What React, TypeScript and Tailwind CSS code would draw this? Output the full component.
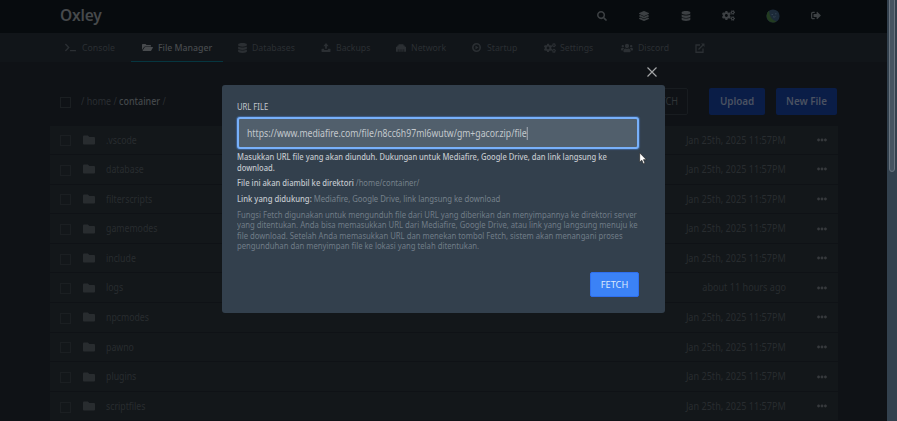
import React from "react";
import {
  FaCogs, FaDatabase, FaEthernet, FaFolder, FaLayerGroup,
  FaSearch, FaSignOutAlt, FaTerminal, FaUsers, FaEllipsisH,
} from "react-icons/fa";

function OpenFolder({ className }: { className?: string }) {
  return (
    <svg viewBox="0 0 22 18" className={className} fill="currentColor">
      <path d="M0 14V3.500Q0 2 1.500 2H7l2 2h7.500Q18 4 18 5.500V7H6.500Q4.500 7 3.700 8.500z" />
      <path d="M6.800 8.200H21q1.400 0 .7 1.200l-3.200 5.600q-.6 1-1.700 1H2q-1.300 0-.6-1.200l3.500-5.600q.6-1 1.900-1z" />
    </svg>
  );
}

function PlayRing({ className }: { className?: string }) {
  return (
    <svg viewBox="0 0 20 20" className={className}>
      <circle cx="10" cy="10" r="8.2" fill="none" stroke="currentColor" strokeWidth="3.6" />
      <path d="M7.600 5.800 14.400 10l-6.800 4.200z" fill="currentColor" />
    </svg>
  );
}

function UploadTray({ className }: { className?: string }) {
  return (
    <svg viewBox="0 0 20 20" className={className} fill="currentColor">
      <path d="M10 0 16 7h-4v6H8V7H4z" />
      <path d="M1 13h5v2.500h8V13h5q1 0 1 1v5q0 1-1 1H1q-1 0-1-1v-5q0-1 1-1z" />
    </svg>
  );
}

function ExternalLink({ className }: { className?: string }) {
  return (
    <svg viewBox="0 0 20 20" className={className} fill="none" stroke="currentColor" strokeWidth="2.6">
      <path d="M10 4H2v14.500h14V11M7 13 17 3" />
      <path d="M12 1h7v7z" fill="currentColor" stroke="none" />
    </svg>
  );
}

const tabs = [
  { label: "Console", Icon: FaTerminal, box: "ml-[54px] w-[77px]", icon: "w-[11px] h-[11px]", gap: "gap-[6px]" },
  { label: "File Manager", Icon: OpenFolder, box: "w-[92px]", icon: "w-[11px] h-[9px]", gap: "gap-[5px]", active: true },
  { label: "Databases", Icon: FaDatabase, box: "ml-[4px] w-[83px]", icon: "w-[9px] h-[10px]", gap: "gap-[5px]" },
  { label: "Backups", Icon: UploadTray, box: "w-[75px]", icon: "w-[10px] h-[9px]", gap: "gap-[5px]" },
  { label: "Network", Icon: FaEthernet, box: "w-[76px]", icon: "w-[10px] h-[10px]", gap: "gap-[5px]" },
  { label: "Startup", Icon: PlayRing, box: "w-[72px]", icon: "w-[9px] h-[9px]", gap: "gap-[6px]" },
  { label: "Settings", Icon: FaCogs, box: "w-[77px]", icon: "w-[12px] h-[10px]", gap: "gap-[4px]" },
  { label: "Discord", Icon: FaUsers, box: "w-[74px]", icon: "w-[12px] h-[10px]", gap: "gap-[5px]" },
];

const files = [".vscode", "database", "filterscripts", "gamemodes", "include", "logs", "npcmodes", "pawno", "plugins", "scriptfiles"];

function Header() {
  return (
    <header className="flex h-[33px] items-center bg-[#070b0e] pb-[2px] pl-[60px] text-[#3c4043]">
      <span className="w-[537px] text-[15.5px] font-semibold leading-none tracking-[-0.2px] text-[#46494b]">Oxley</span>
      <FaSearch className="h-[10px] w-[10px]" />
      <FaLayerGroup className="ml-[32px] h-[10px] w-[10px]" />
      <FaDatabase className="ml-[32px] h-[10px] w-[10px]" />
      <FaCogs className="ml-[31px] h-[11px] w-[13px]" />
      <svg viewBox="0 0 14 14" className="ml-[31px] h-[14px] w-[14px]">
        <circle cx="7" cy="7" r="6.6" fill="#1c2a39" />
        <path d="M3 1.800A6.600 6.600 0 0 0 10.500 12.600Q3.800 11 3 1.800z" fill="#233c20" />
        <path d="M5.500 5.500h1.500M9 4.800h1.500M7 7.800q1.500 .7 2.500-.4" stroke="#384957" strokeWidth=".8" fill="none" />
      </svg>
      <FaSignOutAlt className="ml-[31px] h-[11px] w-[10px]" />
    </header>
  );
}

function Tabs() {
  return (
    <nav className="flex h-[29px] bg-[#111519] text-[9.6px] text-[#2b2f33]">
      {tabs.map(({ label, Icon, box, icon, gap, active }) => (
        <div key={label} className={`flex shrink-0 items-center border-b pl-[11px] pt-[1px] ${box} ${gap} ${active ? "border-b-[#063640] font-medium text-[#484b4e]" : "border-b-transparent"}`}>
          <Icon className={`shrink-0 ${icon}`} />
          <span className="origin-left scale-x-[0.91] whitespace-nowrap leading-none">{label}</span>
        </div>
      ))}
      <ExternalLink className="ml-[11px] mt-[10px] h-[10px] w-[10px]" />
    </nav>
  );
}

function Box() {
  return <span className="h-[11px] w-[11px] shrink-0 border border-[#1b1f22]" />;
}

function Files() {
  return (
    <main className="box-content flex w-[788px] flex-col pl-[49.5px]">
      <div className="flex h-[63.5px] items-start pl-[10.5px] pt-[26px]">
        <div className="flex h-[28px] items-center text-[10.2px] text-[#2a2e32]">
          <Box />
          <span className="ml-[10px] origin-left scale-x-[0.88] whitespace-pre">/ home / <b className="font-medium text-[#43474a]">container</b> /</span>
        </div>
        <div className="ml-auto flex h-[27px] pr-[0.5px] text-[10.4px]">
          <div className="mr-[21px] flex w-[52px] items-center justify-end rounded-[2px] border border-[#181c20] pr-[9px] text-[#303437]"><span className="origin-right scale-x-[0.88]">FETCH</span></div>
          <div className="mr-[11px] flex w-[56px] items-center justify-center rounded-[2px] bg-[#0a1d47] pt-[1px] font-semibold text-[#4b5261]"><span className="scale-x-[0.95]">Upload</span></div>
          <div className="flex w-[61px] items-center justify-center rounded-[2px] bg-[#0a1d47] pt-[1px] font-semibold text-[#4b5261]"><span className="scale-x-[0.95]">New File</span></div>
        </div>
      </div>
      {files.map((name) => (
        <div key={name} className="mb-[1.1px] flex h-[28.5px] shrink-0 items-center bg-[#13171a] pl-[10.5px] text-[10px] text-[#282c2f]">
          <span className="flex pt-[2px]"><Box /></span>
          <FaFolder className="ml-[12px] h-[12px] w-[12px]" />
          <span className="ml-[11px] origin-left scale-x-[0.875] pt-[0.5px]">{name}</span>
          <span className="ml-auto origin-right scale-x-[0.91] pt-[0.5px]">{name === "logs" ? "about 11 hours ago" : "Jan 25th, 2025 11:57PM"}</span>
          <FaEllipsisH className="ml-[31px] mr-[11px] h-[10px] w-[10px] text-[#36393c]" />
        </div>
      ))}
    </main>
  );
}

function FetchDialog() {
  return (
    <section role="dialog" className="absolute left-[222px] top-[85px] flex h-[227.5px] w-[443px] flex-col rounded-[3px] bg-[#33404d] px-[15px] pt-[17px] text-[8.2px] leading-[10.5px] text-[#c3c8cd]">
      <svg viewBox="0 0 10 10" className="absolute -top-[18px] right-[8px] h-[10px] w-[10px]" stroke="#a3a5a6" strokeWidth="1.2">
        <path d="M.5 .5 9.500 9.500M9.500 .5 .5 9.500" />
      </svg>
      <div className="origin-left scale-x-[0.88] text-[8.7px]">URL FILE</div>
      <div className="mt-[4.5px] flex h-[32px] w-[402px] items-center rounded-[3px] border-2 border-[#78b0fa] bg-[#515f6c] pl-[8px] text-[10.2px] shadow-[0_0_1px_1px_#3d5f8c]">
        <span className="flex origin-left scale-x-[0.853] items-center">
          https://www.mediafire.com/file/n8cc6h97ml6wutw/gm+gacor.zip/file
          <span className="h-[13px] w-px bg-[#b4bbc2]" />
        </span>
      </div>
      <p className="mt-[3px] origin-left scale-x-[0.924] whitespace-nowrap font-medium">Masukkan URL file yang akan diunduh. Dukungan untuk Mediafire, Google Drive, dan link langsung ke<br />download.</p>
      <p className="mt-[5px] origin-left scale-x-[0.935] whitespace-nowrap"><b className="font-medium">File ini akan diambil ke direktori</b> <span className="text-[#76818b]">/home/container/</span></p>
      <p className="mt-[5px] origin-left scale-x-[0.941] whitespace-nowrap"><b className="font-medium">Link yang didukung:</b> <span className="text-[#76818b]">Mediafire, Google Drive, link langsung ke download</span></p>
      <p className="mt-[5.5px] origin-left scale-x-[0.941] whitespace-nowrap text-[#707c87]">
        Fungsi Fetch digunakan untuk mengunduh file dari URL yang diberikan dan menyimpannya ke direktori server<br />
        yang ditentukan. Anda bisa memasukkan URL dari Mediafire, Google Drive, atau link yang langsung menuju ke<br />
        file download. Setelah Anda memasukkan URL dan menekan tombol Fetch, sistem akan menangani proses<br />
        pengunduhan dan menyimpan file ke lokasi yang telah ditentukan.
      </p>
      <button className="ml-[353px] mt-[20.5px] h-[25px] w-[49px] rounded-[2px] border border-[#2f6fee] bg-[#3b82f6] pt-[1px] text-[9.2px] text-[#dce9fd]">FETCH</button>
    </section>
  );
}

export default function App() {
  return (
    <div className="relative flex h-[421px] w-[897px] overflow-hidden bg-[#0f1216] font-['Noto_Sans',sans-serif]">
      <div className="h-full w-[887px] shrink-0 overflow-hidden">
        <Header />
        <Tabs />
        <Files />
      </div>
      <div className="w-[10px] bg-[#33414e] pl-[2px]">
        <div className="-mt-[3px] h-[175px] w-[6px] rounded-[3px] border border-[#6a7580] bg-[#465461]" />
      </div>
      <FetchDialog />
      <svg viewBox="0 0 12 19" className="absolute left-[639px] top-[152px] h-[13px] w-[8px]">
        <path d="M1 1v14l3.200-3 2.300 5.500 2.500-1-2.300-5.300H11z" fill="#fff" stroke="#222" strokeWidth="1" />
      </svg>
    </div>
  );
}
